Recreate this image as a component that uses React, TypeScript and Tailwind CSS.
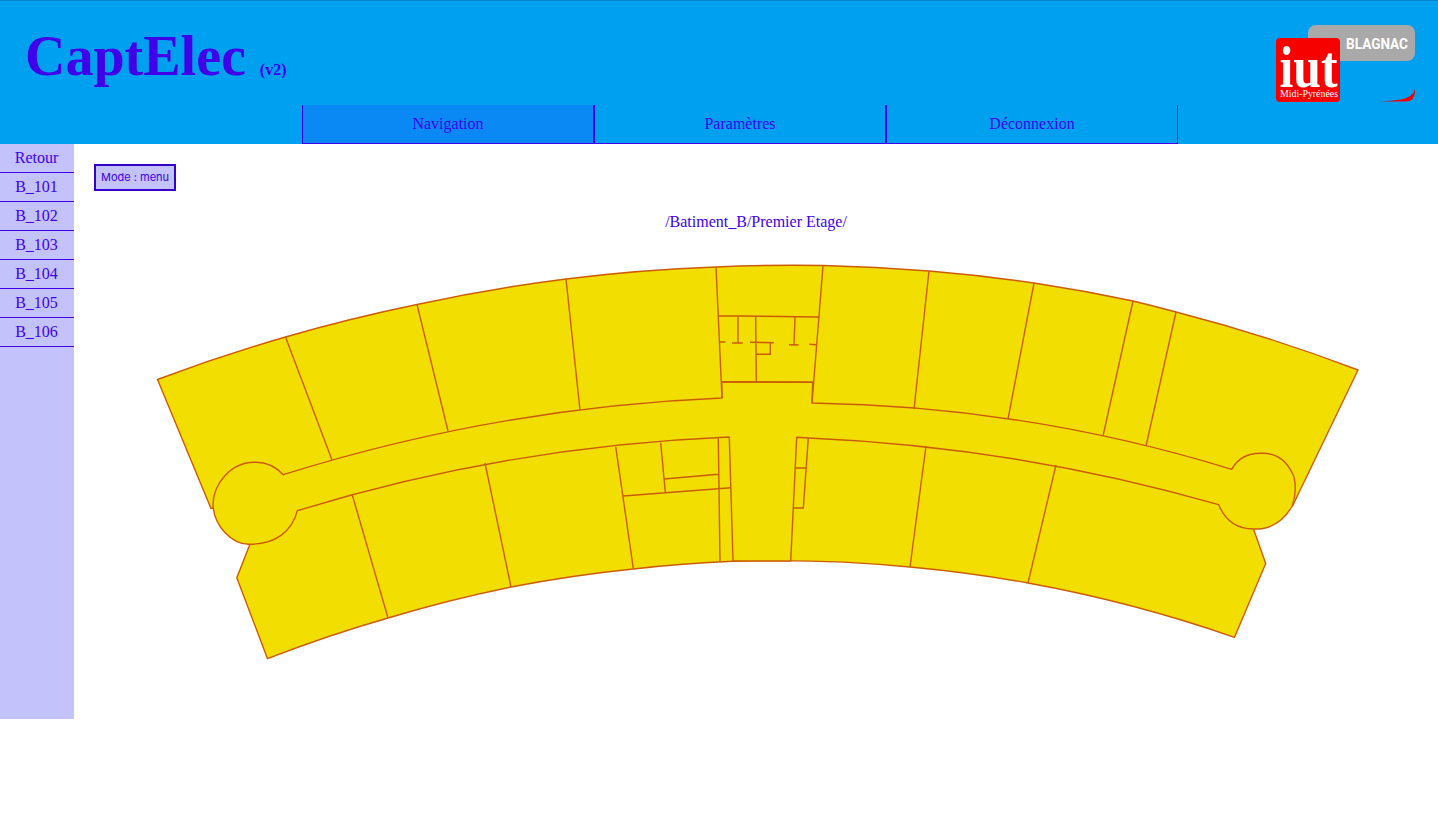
import React from 'react';

const rooms = ['Retour', 'B_101', 'B_102', 'B_103', 'B_104', 'B_105', 'B_106'];
const tabs = ['Navigation', 'Paramètres', 'Déconnexion'];

// cloisons du plan, en coordonnees de page
const walls = [
  'M285.5 337 L332 460',
  'M417 304.5 L448 431',
  'M566 279 L580 410',
  'M716 267 L722 398',
  'M823 266 L812 403',
  'M929 271 L914 409',
  'M1034 283 L1008 419',
  'M1133 301 L1103 436',
  'M1176 312 L1146 446',
  'M718.3 315.7 L818.3 317',
  'M721.7 381.7 L812.7 382.3',
  'M755.7 316.3 L756.3 381.7',
  'M738 316 L738 343',
  'M732 343 L742.7 343',
  'M719.3 342 L725.3 342',
  'M750 342.3 L773.7 342.7',
  'M770.3 342.7 L770.3 354.3 L756 354.3',
  'M795 317 L794 344.7',
  'M789 344.7 L798.7 345',
  'M809.3 344.3 L816 344.7',
  'M615.7 446.7 L633.3 568.3',
  'M660.7 442.7 L665.3 492.3',
  'M718.3 438.3 L720 562',
  'M664 479 L718.3 474.3',
  'M623.3 496 L730.7 487.7',
  'M808.3 438 L803.3 508 L793.3 508',
  'M795.3 468 L806 468',
  'M352 494 L388 618',
  'M485 463 L511 587',
  'M926 446 L910 567',
  'M1056 465 L1028 583',
];

const wallColor = '#cb5c04';

function FloorPlan() {
  return (
    <svg className="block mt-[18px]" width="1364" height="420" viewBox="74 250 1364 420">
      {/* contour exterieur */}
      <path
        d="M157.5 379.5 A1700 1700 0 0 1 285.5 337 A1700 1700 0 0 1 417 304.5 A1700 1700 0 0 1 566 279 A1700 1700 0 0 1 716 267 A1700 1700 0 0 1 823 265.5 A1700 1700 0 0 1 929 271 A1700 1700 0 0 1 1034 283 A1700 1700 0 0 1 1133 301 A1700 1700 0 0 1 1176 312 A1700 1700 0 0 1 1358 370 L1292.5 506 L1253.5 529 L1265.7 563.5 L1234.5 637.3 A1375 1375 0 0 0 1028 583 A1375 1375 0 0 0 910 567 A1375 1375 0 0 0 733 561.3 A1375 1375 0 0 0 633.3 569 A1375 1375 0 0 0 511 587 A1375 1375 0 0 0 388 618 A1375 1375 0 0 0 267.5 658.7 L236.8 577.7 L250 544 L230 530 L214 508 L211 508.5 Z"
        fill="#f2de00"
        stroke={wallColor}
        strokeWidth="1.4"
        strokeLinejoin="round"
      />
      {/* couloir et ses deux extremites arrondies */}
      <path
        d="M722 398 A1700 1700 0 0 0 283.3 474.7 C275 466 265 462 255 462.3 C230 462 213 485 213 505 C214 526 232 545 250 544.3 C275 544 292 532 297.3 510.7 A1710 1710 0 0 1 729.3 437 L733 561 L790.7 561 L796.7 437.3 L808.3 438 A1760 1760 0 0 1 1218.7 504.7 C1225 520 1237 529 1253.3 529 C1272 530 1284 520 1292.3 506 C1296 495 1296 486 1294 477 C1288 462 1278 453 1261.7 453.3 C1248 453 1238 458 1231.7 469.3 A1500 1500 0 0 0 812 403 L812.7 382.3 L721.7 381.7 Z"
        fill="#f2de00"
        stroke={wallColor}
        strokeWidth="1.4"
        strokeLinejoin="round"
      />
      <path d={walls.join(' ')} fill="none" stroke={wallColor} strokeWidth="1.4" />
    </svg>
  );
}

function Logo() {
  return (
    <svg width="139" height="77" viewBox="0 0 139 77" className="block">
      <rect x="32" y="0" width="107" height="36" rx="8" fill="#a9a9a9" />
      <text x="70" y="24.3" fill="#fff" fontFamily="Roboto, sans-serif" fontWeight="700" fontSize="14" textLength="62" lengthAdjust="spacingAndGlyphs">
        BLAGNAC
      </text>
      <path d="M104 76.5 L130 76.5 Q139 76 139 66 L139 64 Q137 72 125 74.5 Q115 76 104 76.5 Z" fill="#f00000" />
      <rect x="0" y="13" width="64" height="64" rx="4" fill="#f60000" />
      <text x="3.5" y="62" fill="#fff" fontFamily="'Liberation Serif', serif" fontWeight="700" fontSize="60" textLength="58" lengthAdjust="spacingAndGlyphs">
        iut
      </text>
      <text x="4" y="71.5" fill="#fff" fontFamily="'Liberation Serif', serif" fontSize="11" textLength="58" lengthAdjust="spacingAndGlyphs">
        Midi-Pyrénées
      </text>
    </svg>
  );
}

export default function App() {
  return (
    <div className="min-h-[820px] bg-white font-['Liberation_Serif',serif] text-[16px] text-[#4000ea]">
      <header className="h-[144px] bg-[#00a0f0] border-t border-[#0a84d0]">
        <div className="h-[104px] flex justify-between items-start pl-[25px] pr-[23px]">
          <div className="flex items-baseline pt-[20px]">
            <h1 className="text-[56px] font-bold leading-[70px]">CaptElec</h1>
            <span className="ml-[14px] font-bold">(v2)</span>
          </div>
          <div className="pt-[24px]">
            <Logo />
          </div>
        </div>
        <nav className="ml-[302px] flex w-[876px]">
          {tabs.map((tab, idx) => (
            <div
              key={tab}
              className={`w-[292px] h-[39px] flex items-center justify-center border-x border-b border-[#4000ea] ${idx === 0 ? 'bg-[#0a88f4]' : ''}`}
            >
              {tab}
            </div>
          ))}
        </nav>
      </header>

      <div className="flex">
        <aside className="w-[74px] h-[575px] bg-[#c4c2fb]">
          {rooms.map((room) => (
            <div key={room} className="h-[29px] flex items-center justify-center pr-[1px] border-b border-[#4000ea]">
              {room}
            </div>
          ))}
        </aside>
        <main className="flex-1 min-w-0">
          <button className="block ml-[20px] mt-[20px] h-[27px] w-[82px] bg-[#c4c2fb] border-2 border-[#3300cc] font-['Inter',sans-serif] text-[11px] text-[#4000ea]">
            Mode : menu
          </button>
          <p className="mt-[21px] h-[20px] leading-[20px] text-center">/Batiment_B/Premier Etage/</p>
          <FloorPlan />
        </main>
      </div>
    </div>
  );
}
